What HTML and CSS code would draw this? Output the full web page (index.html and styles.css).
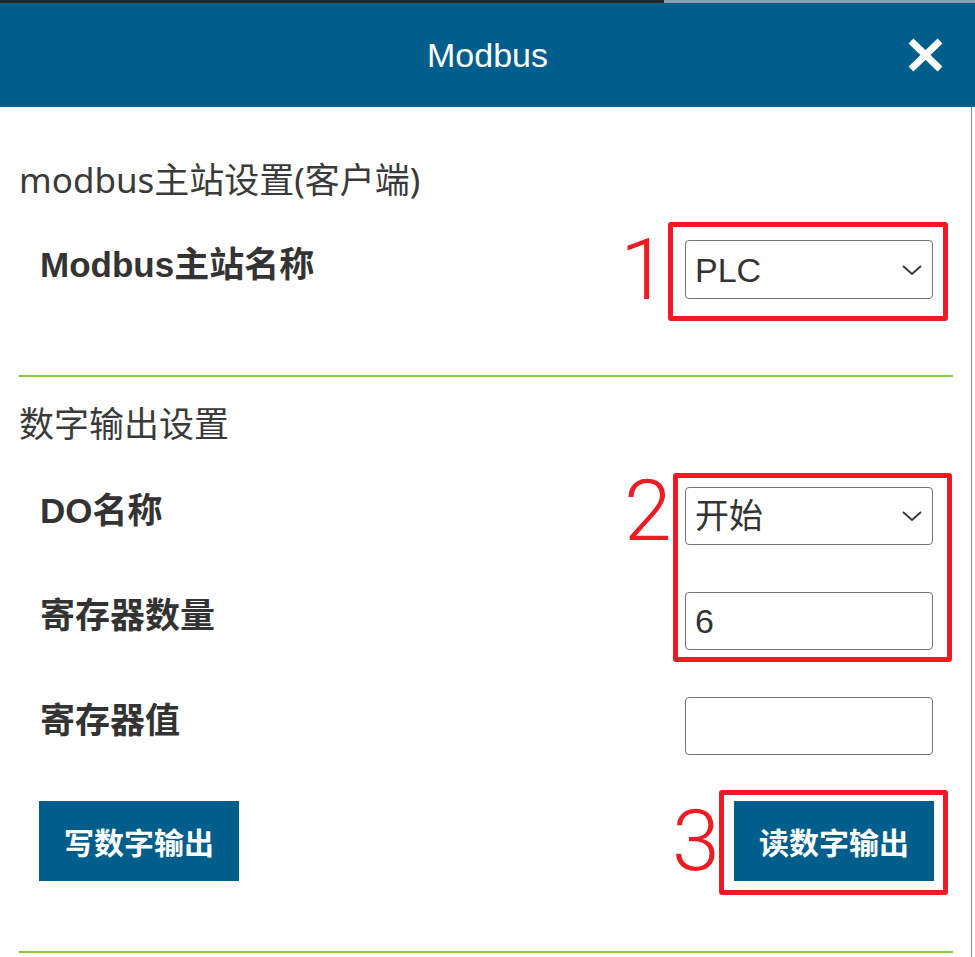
FILE: index.html
```html
<!DOCTYPE html>
<html lang="zh-CN">
<head>
<meta charset="utf-8">
<title>Modbus</title>
<link rel="stylesheet" href="styles.css">
</head>
<body>
<div class="topbar"><div class="topbar-dark"></div><div class="topbar-light"></div></div>
<header class="header">
  <h1 class="title">Modbus</h1>
  <button class="close" type="button" aria-label="关闭">
    <svg width="35" height="34" viewBox="0 0 35 34"><path d="M3 3 L32 31 M32 3 L3 31" stroke="#fff" stroke-width="7" fill="none"/></svg>
  </button>
</header>
<main class="panel">
  <section class="section section-master">
    <h2 class="section-title">modbus主站设置(客户端)</h2>
    <div class="row row-first">
      <label class="label">Modbus主站名称</label>
      <div class="control-wrap control-tall">
        <select class="control"><option>PLC</option></select>
        <svg class="chevron" width="20" height="10" viewBox="0 0 20 10"><polyline points="1,1 10,9 19,1" fill="none" stroke="#333" stroke-width="1.8"/></svg>
        <span class="mark mark-1"></span>
        <span class="num num-1">1</span>
      </div>
    </div>
  </section>
  <section class="section section-do">
    <h2 class="section-title">数字输出设置</h2>
    <div class="row row-do">
      <label class="label">DO名称</label>
      <div class="control-wrap">
        <select class="control"><option>开始</option></select>
        <svg class="chevron" width="20" height="10" viewBox="0 0 20 10"><polyline points="1,1 10,9 19,1" fill="none" stroke="#333" stroke-width="1.8"/></svg>
        <span class="mark mark-2"></span>
        <span class="num num-2">2</span>
      </div>
    </div>
    <div class="row row-next">
      <label class="label">寄存器数量</label>
      <div class="control-wrap">
        <input class="control" type="text" value="6">
      </div>
    </div>
    <div class="row row-next">
      <label class="label">寄存器值</label>
      <div class="control-wrap">
        <input class="control" type="text" value="">
      </div>
    </div>
    <div class="row row-buttons">
      <button class="btn" type="button">写数字输出</button>
      <span class="btn-wrap">
        <button class="btn" type="button">读数字输出</button>
        <span class="mark mark-3"></span>
        <span class="num num-3">3</span>
      </span>
    </div>
  </section>
</main>
</body>
</html>
```
FILE: styles.css
```css
html, body {
  margin: 0;
  padding: 0;
}
body {
  width: 975px;
  height: 957px;
  overflow: hidden;
  background: #fff;
  color: #333;
  font-family: "Liberation Sans", "Noto Sans CJK SC", sans-serif;
}
.topbar {
  display: flex;
  height: 3px;
}
.topbar-dark {
  width: 664px;
  background: #262626;
}
.topbar-light {
  flex: 1;
  background: #8d9db3;
}
.header {
  height: 104px;
  background: #005e8c;
  display: grid;
  grid-template-columns: 1fr auto 1fr;
  align-items: center;
  color: #fff;
}
.title {
  grid-column: 2;
  margin: 0;
  font-size: 34px;
  font-weight: normal;
  font-family: "Liberation Sans", sans-serif;
}
.close {
  grid-column: 3;
  justify-self: end;
  margin-right: 32px;
  width: 35px;
  height: 34px;
  padding: 0;
  border: 0;
  background: none;
  display: block;
}
.close svg {
  display: block;
}
.panel {
  width: 971px;
  height: 850px;
  border-right: 1px solid #8f8f8f;
}
.section {
  margin: 0 18px 0 19px;
  border-bottom: 2px solid #8dc63f;
}
.section-master {
  padding-top: 53px;
  padding-bottom: 76px;
}
.section-do {
  padding-top: 27px;
  padding-bottom: 70px;
}
.section-title {
  margin: 0;
  font-size: 35px;
  line-height: 40px;
  font-weight: normal;
  color: #3a3a3a;
  font-family: "Noto Sans", "Noto Sans CJK SC", sans-serif;
}
.row {
  display: flex;
  justify-content: space-between;
  align-items: center;
  padding: 0 20px 0 21px;
}
.row-first {
  margin-top: 40px;
}
.row-do {
  margin-top: 43px;
}
.row-next {
  margin-top: 47px;
}
.row-buttons {
  margin-top: 46px;
  padding: 0 19px 0 20px;
}
.label {
  font-size: 35px;
  line-height: 40px;
  font-weight: bold;
  color: #333;
  margin-bottom: 10px;
}
.control-wrap {
  position: relative;
  width: 248px;
  height: 58px;
}
.control-tall {
  height: 59px;
}
.control {
  display: block;
  width: 100%;
  height: 100%;
  box-sizing: border-box;
  margin: 0;
  border: 1px solid #767676;
  border-radius: 4px;
  background: #fff;
  color: #333;
  padding: 0 0 0 9px;
  font-family: "Liberation Sans", "Noto Sans CJK SC", sans-serif;
  font-size: 34px;
  -webkit-appearance: none;
  appearance: none;
  outline: none;
}
.chevron {
  position: absolute;
  right: 11px;
  top: 50%;
  margin-top: -5px;
  pointer-events: none;
}
.btn {
  display: block;
  width: 200px;
  height: 80px;
  margin: 0;
  padding: 0;
  border: 0;
  border-radius: 0;
  background: #005e8c;
  color: #fff;
  font-family: "Noto Sans CJK SC", sans-serif;
  font-weight: bold;
  font-size: 30px;
}
.btn-wrap {
  position: relative;
  display: block;
}
.mark {
  position: absolute;
  border: 5px solid #ed1c24;
  border-radius: 3px;
  pointer-events: none;
}
.mark-1 {
  top: -18px;
  left: -17px;
  right: -15px;
  bottom: -22px;
}
.mark-2 {
  top: -14px;
  left: -12px;
  right: -19px;
  bottom: -117px;
}
.mark-3 {
  top: -11px;
  left: -15px;
  right: -14px;
  bottom: -14px;
}
.num {
  position: absolute;
  font-family: Roboto, sans-serif;
  font-weight: 300;
  font-size: 86px;
  line-height: 1;
  color: #ed1c24;
}
.num-1 {
  left: -65px;
  top: -13px;
}
.num-2 {
  left: -61px;
  top: -19px;
}
.num-3 {
  left: -62px;
  top: -3px;
}
```
